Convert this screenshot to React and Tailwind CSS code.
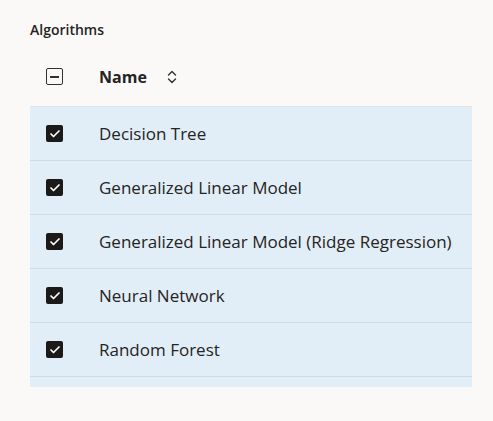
import { Check } from 'lucide-react';

const algorithms = [
  'Decision Tree',
  'Generalized Linear Model',
  'Generalized Linear Model (Ridge Regression)',
  'Neural Network',
  'Random Forest',
];

const SortIcon = () => (
  <svg width="10" height="16" viewBox="0 0 10 16" fill="none" stroke="#323130" strokeWidth="1.4" strokeLinecap="round" strokeLinejoin="round">
    <path d="M1.5 6 L5 2.5 L8.5 6" />
    <path d="M1.5 10 L5 13.5 L8.5 10" />
  </svg>
);

const CheckedBox = () => (
  <div className="w-[17px] h-[17px] rounded-[2px] bg-[#1b1a19] flex items-center justify-center">
    <Check className="w-3 h-3 text-white" strokeWidth={3.5} />
  </div>
);

export default function App() {
  return (
    <div className="min-h-screen bg-[#faf9f8] pt-[19px] px-[30px]" style={{ fontFamily: '"Open Sans", "Noto Sans", sans-serif' }}>
      <h2 className="text-[14px] font-semibold text-[#252423] leading-[22px]">Algorithms</h2>

      <div className="mt-[14px] w-[442px]">
        {/* Header */}
        <div className="h-[52px] pb-[8px] flex items-center border-b border-[#dde3e8]">
          <div className="w-[69px] pl-[16px] flex items-center">
            <div className="w-[17px] h-[17px] rounded-[2px] border-[1.5px] border-[#323130] flex items-center justify-center">
              <div className="w-[9px] h-[2px] bg-[#323130]" />
            </div>
          </div>
          <span className="text-[16px] font-bold text-[#252423]">Name</span>
          <span className="ml-[20px] flex items-center"><SortIcon /></span>
        </div>

        {/* Rows */}
        {algorithms.map((name) => (
          <div key={name} className="h-[54px] flex items-center bg-[#e2eef7] border-b border-[#d0dbe3]">
            <div className="w-[69px] pl-[16px] flex items-center">
              <CheckedBox />
            </div>
            <span className="text-[17px] text-[#252423] whitespace-nowrap">{name}</span>
          </div>
        ))}
        <div className="h-[10px] bg-[#e2eef7]" />
      </div>
    </div>
  );
}
